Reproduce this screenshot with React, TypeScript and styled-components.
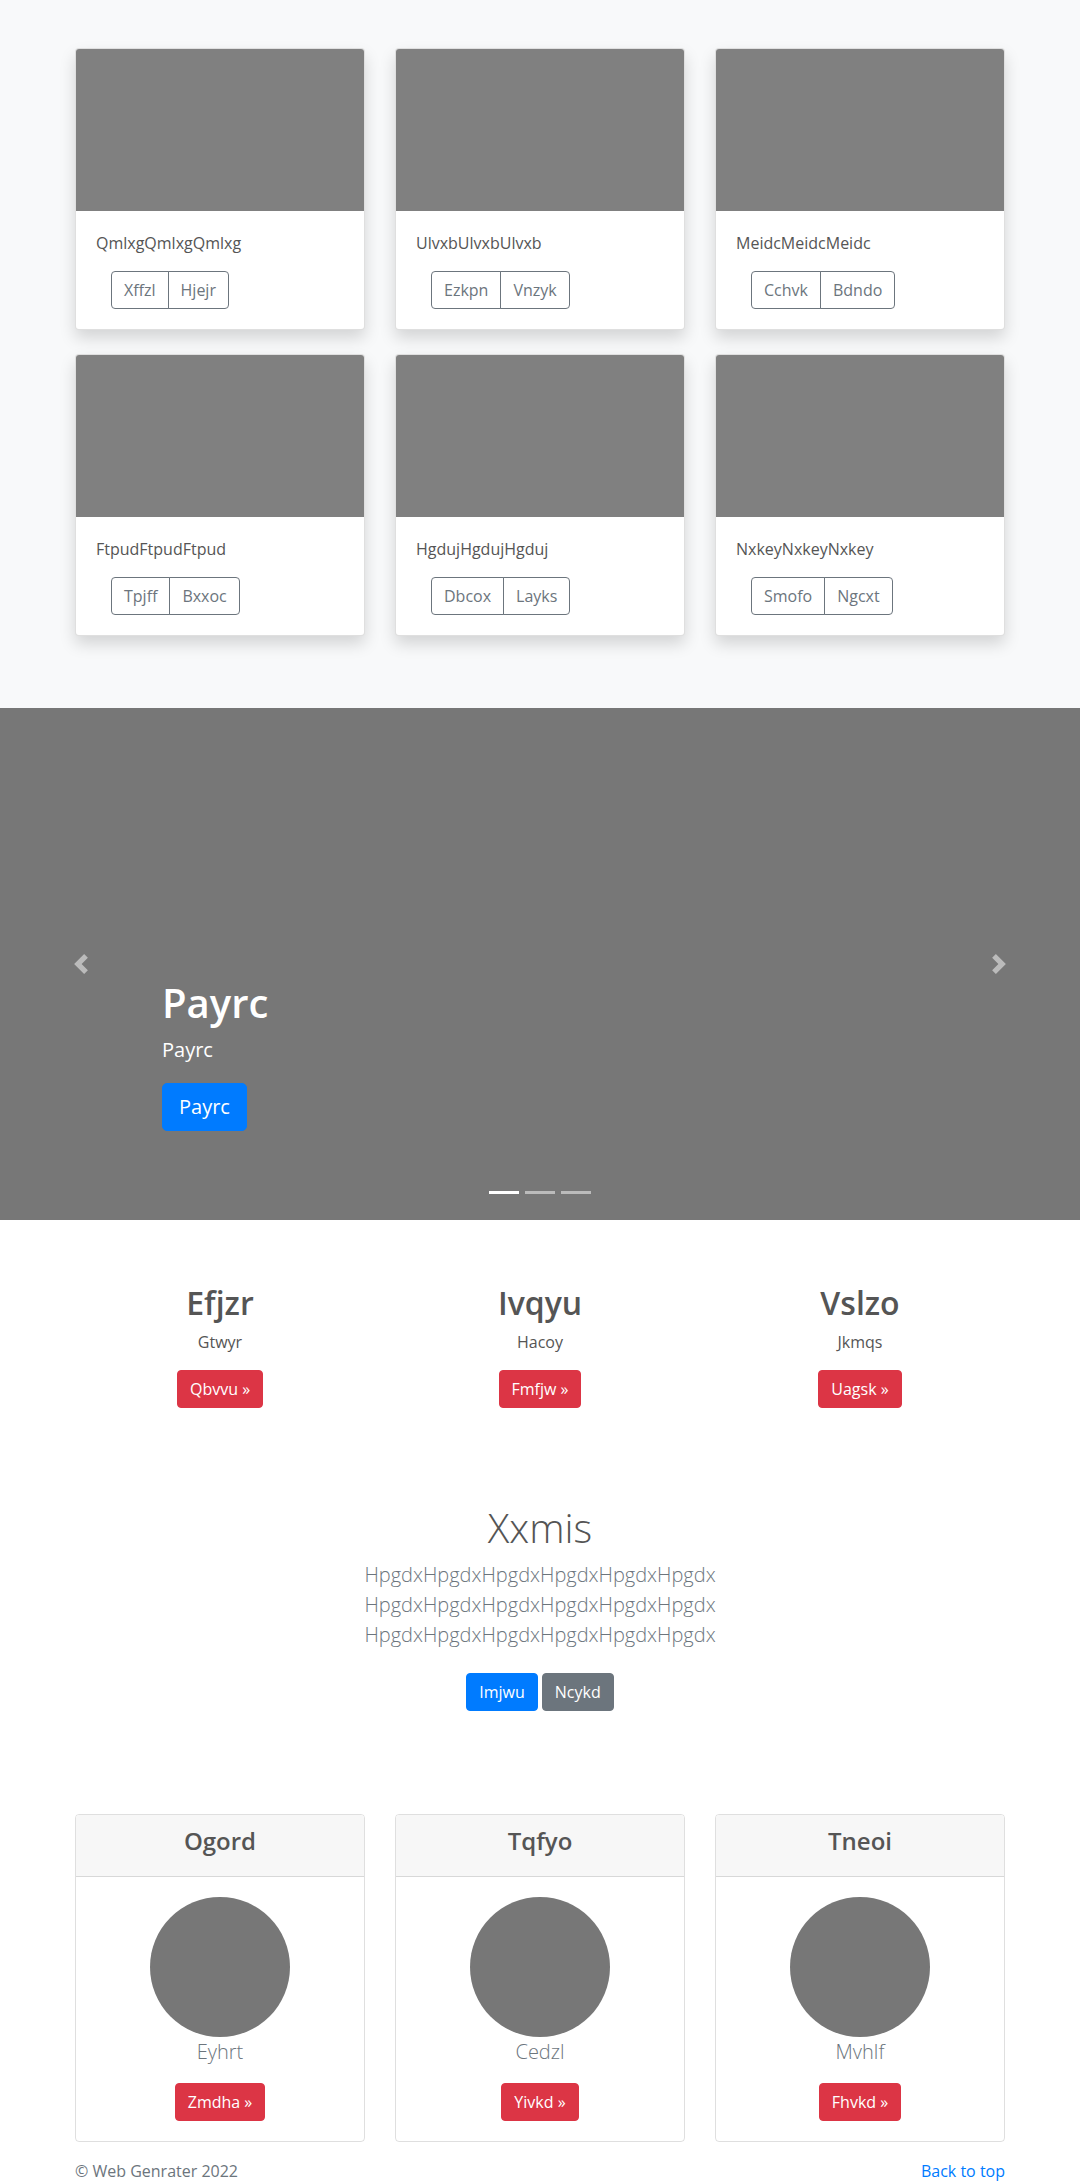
import React from "react";
import styled, { createGlobalStyle } from "styled-components";

const GlobalStyle = createGlobalStyle`
  html, body { margin: 0; padding: 0; }
  body {
    font-family: "Open Sans", "Noto Sans", "Liberation Sans", sans-serif;
    font-size: 16px;
    line-height: 1.5;
    color: #555;
    background: #fff;
  }
  * { box-sizing: border-box; }
`;

const Container = styled.div`
  width: 930px;
  margin: 0 auto;
`;

const ThreeCols = styled.div<{ $rowGap?: number }>`
  display: grid;
  grid-template-columns: repeat(3, 1fr);
  column-gap: 30px;
  row-gap: ${(p) => p.$rowGap ?? 0}px;
`;

/* ---------- Album ---------- */
const Album = styled.section`
  background: #f8f9fa;
  padding: 48px 0 72px;
`;

const AlbumCard = styled.div`
  background: #fff;
  border: 1px solid rgba(0, 0, 0, 0.125);
  border-radius: 4px;
  overflow: hidden;
  box-shadow: 0 8px 16px rgba(0, 0, 0, 0.15);
`;

const Thumb = styled.div`
  height: 162px;
  background: #808080;
`;

const AlbumBody = styled.div`
  padding: 20px;
`;

const CardText = styled.p`
  margin: 0 0 16px;
  font-size: 16px;
  line-height: 24px;
  color: #555;
`;

const BtnGroup = styled.div`
  display: inline-flex;
  margin-left: 15px;
`;

const OutlineBtn = styled.button`
  font-family: inherit;
  font-size: 16px;
  line-height: 24px;
  padding: 6px 12px;
  color: #6c757d;
  background: transparent;
  border: 1px solid #6c757d;
  border-radius: 0;
  cursor: pointer;
  &:first-child { border-radius: 4px 0 0 4px; }
  &:last-child { border-radius: 0 4px 4px 0; margin-left: -1px; }
`;

/* ---------- Carousel ---------- */
const Carousel = styled.section`
  position: relative;
  height: 512px;
  background: #777;
  overflow: hidden;
`;

const Caption = styled.div`
  position: absolute;
  left: 15%;
  right: 15%;
  bottom: 69px;
  padding: 20px 0;
  color: #fff;
  text-align: left;
`;

const CaptionTitle = styled.h1`
  margin: 0 0 8px;
  font-size: 40px;
  line-height: 1.2;
  font-weight: 600;
`;

const CaptionText = styled.p`
  margin: 0 0 18px;
  font-size: 20px;
  line-height: 30px;
`;

const Btn = styled.button<{ $variant: "primary" | "secondary" | "danger"; $lg?: boolean }>`
  font-family: inherit;
  font-weight: 400;
  font-size: ${(p) => (p.$lg ? 20 : 16)}px;
  line-height: 1.5;
  padding: ${(p) => (p.$lg ? "8px 16px" : "6px 12px")};
  border-radius: ${(p) => (p.$lg ? 5 : 4)}px;
  color: #fff;
  cursor: pointer;
  background: ${(p) =>
    p.$variant === "primary" ? "#007bff" : p.$variant === "danger" ? "#dc3545" : "#6c757d"};
  border: 1px solid
    ${(p) => (p.$variant === "primary" ? "#007bff" : p.$variant === "danger" ? "#dc3545" : "#6c757d")};
`;

const Control = styled.div<{ $side: "left" | "right" }>`
  position: absolute;
  top: 0;
  bottom: 0;
  ${(p) => p.$side}: 0;
  width: 15%;
  display: flex;
  align-items: center;
  justify-content: center;
  opacity: 0.5;
`;

const Indicators = styled.ol`
  position: absolute;
  left: 0;
  right: 0;
  bottom: 26px;
  margin: 0;
  padding: 0;
  list-style: none;
  display: flex;
  justify-content: center;
`;

const Indicator = styled.li<{ $active?: boolean }>`
  width: 30px;
  height: 3px;
  margin: 0 3px;
  background: #fff;
  opacity: ${(p) => (p.$active ? 1 : 0.5)};
`;

/* ---------- Marketing ---------- */
const Marketing = styled.section`
  padding: 64px 0 16px;
`;

const MarketingCol = styled.div`
  text-align: center;
`;

const MarketingTitle = styled.h2`
  margin: 0 0 8px;
  font-size: 32px;
  line-height: 1.2;
  font-weight: 600;
  color: #555;
`;

const MarketingText = styled.p`
  margin: 0 0 16px;
  font-size: 16px;
  line-height: 24px;
  color: #555;
`;

const BtnRow = styled.div`
  margin: 0 0 16px;
  display: flex;
  justify-content: center;
  gap: 4px;
`;

/* ---------- Jumbotron ---------- */
const Jumbotron = styled.section`
  padding: 64px 0 95px;
  text-align: center;
`;

const JumboInner = styled.div`
  max-width: 640px;
  margin: 0 auto;
  padding: 0 15px;
`;

const JumboTitle = styled.h1`
  margin: 0 0 8px;
  font-size: 40px;
  line-height: 1.2;
  font-weight: 300;
  color: #555;
`;

const Lead = styled.p`
  margin: 0;
  font-size: 20px;
  line-height: 30px;
  font-weight: 300;
  color: #6c757d;
`;

const JumboButtons = styled.div`
  display: flex;
  justify-content: center;
  gap: 4px;
  margin: 23px 0 8px;
`;

/* ---------- Profile cards ---------- */
const ProfileCard = styled.div`
  border: 1px solid rgba(0, 0, 0, 0.125);
  border-radius: 4px;
  overflow: hidden;
  text-align: center;
`;

const ProfileHeader = styled.div`
  background: #f7f7f7;
  border-bottom: 1px solid rgba(0, 0, 0, 0.125);
  padding: 12px 20px;
`;

const ProfileTitle = styled.h4`
  margin: 0 0 8px;
  font-size: 24px;
  line-height: 1.2;
  font-weight: 600;
  color: #555;
`;

const ProfileBody = styled.div`
  padding: 20px;
  display: flex;
  flex-direction: column;
  align-items: center;
`;

const Avatar = styled.div`
  width: 140px;
  height: 140px;
  border-radius: 50%;
  background: #777;
`;

const ProfileName = styled.p`
  margin: 0 0 16px;
  font-size: 20px;
  line-height: 30px;
  font-weight: 300;
  color: #6c757d;
`;

/* ---------- Footer ---------- */
const Footer = styled.footer`
  padding: 17px 0 24px;
  color: #6c757d;
`;

const FooterRow = styled.div`
  display: flex;
  justify-content: space-between;
  font-size: 16px;
  line-height: 24px;
`;

const TopLink = styled.a`
  color: #007bff;
  text-decoration: none;
`;

const Chevron = ({ dir }: { dir: "prev" | "next" }) => (
  <svg width="20" height="20" viewBox="0 0 8 8" fill="#fff">
    {dir === "prev" ? (
      <path d="M5.25 0l-4 4 4 4 1.5-1.5L4.25 4l2.5-2.5L5.25 0z" />
    ) : (
      <path d="M2.75 0l-1.5 1.5L3.75 4l-2.5 2.5L2.75 8l4-4-4-4z" />
    )}
  </svg>
);

const albumItems = [
  { t: "QmlxgQmlxgQmlxg", a: "Xffzl", b: "Hjejr" },
  { t: "UlvxbUlvxbUlvxb", a: "Ezkpn", b: "Vnzyk" },
  { t: "MeidcMeidcMeidc", a: "Cchvk", b: "Bdndo" },
  { t: "FtpudFtpudFtpud", a: "Tpjff", b: "Bxxoc" },
  { t: "HgdujHgdujHgduj", a: "Dbcox", b: "Layks" },
  { t: "NxkeyNxkeyNxkey", a: "Smofo", b: "Ngcxt" },
];

const marketing = [
  { h: "Efjzr", p: "Gtwyr", b: "Qbvvu" },
  { h: "Ivqyu", p: "Hacoy", b: "Fmfjw" },
  { h: "Vslzo", p: "Jkmqs", b: "Uagsk" },
];

const profiles = [
  { h: "Ogord", n: "Eyhrt", b: "Zmdha" },
  { h: "Tqfyo", n: "Cedzl", b: "Yivkd" },
  { h: "Tneoi", n: "Mvhlf", b: "Fhvkd" },
];

const word = "HpgdxHpgdxHpgdxHpgdxHpgdxHpgdx";

export default function App() {
  return (
    <>
      <GlobalStyle />
      <Album>
        <Container>
          <ThreeCols $rowGap={24}>
            {albumItems.map((it) => (
              <AlbumCard key={it.t}>
                <Thumb />
                <AlbumBody>
                  <CardText>{it.t}</CardText>
                  <BtnGroup>
                    <OutlineBtn>{it.a}</OutlineBtn>
                    <OutlineBtn>{it.b}</OutlineBtn>
                  </BtnGroup>
                </AlbumBody>
              </AlbumCard>
            ))}
          </ThreeCols>
        </Container>
      </Album>

      <Carousel>
        <Control $side="left">
          <Chevron dir="prev" />
        </Control>
        <Control $side="right">
          <Chevron dir="next" />
        </Control>
        <Caption>
          <CaptionTitle>Payrc</CaptionTitle>
          <CaptionText>Payrc</CaptionText>
          <Btn $variant="primary" $lg>
            Payrc
          </Btn>
        </Caption>
        <Indicators>
          <Indicator $active />
          <Indicator />
          <Indicator />
        </Indicators>
      </Carousel>

      <Marketing>
        <Container>
          <ThreeCols>
            {marketing.map((m) => (
              <MarketingCol key={m.h}>
                <MarketingTitle>{m.h}</MarketingTitle>
                <MarketingText>{m.p}</MarketingText>
                <BtnRow>
                  <Btn $variant="danger">{m.b} »</Btn>
                </BtnRow>
              </MarketingCol>
            ))}
          </ThreeCols>
        </Container>
      </Marketing>

      <Jumbotron>
        <JumboInner>
          <JumboTitle>Xxmis</JumboTitle>
          <Lead>
            {word} {word} {word}
          </Lead>
          <JumboButtons>
            <Btn $variant="primary">Imjwu</Btn>
            <Btn $variant="secondary">Ncykd</Btn>
          </JumboButtons>
        </JumboInner>
      </Jumbotron>

      <Container>
        <ThreeCols>
          {profiles.map((p) => (
            <ProfileCard key={p.h}>
              <ProfileHeader>
                <ProfileTitle>{p.h}</ProfileTitle>
              </ProfileHeader>
              <ProfileBody>
                <Avatar />
                <ProfileName>{p.n}</ProfileName>
                <Btn $variant="danger">{p.b} »</Btn>
              </ProfileBody>
            </ProfileCard>
          ))}
        </ThreeCols>
      </Container>

      <Footer>
        <Container>
          <FooterRow>
            <span>© Web Genrater 2022</span>
            <TopLink href="#">Back to top</TopLink>
          </FooterRow>
        </Container>
      </Footer>
    </>
  );
}
